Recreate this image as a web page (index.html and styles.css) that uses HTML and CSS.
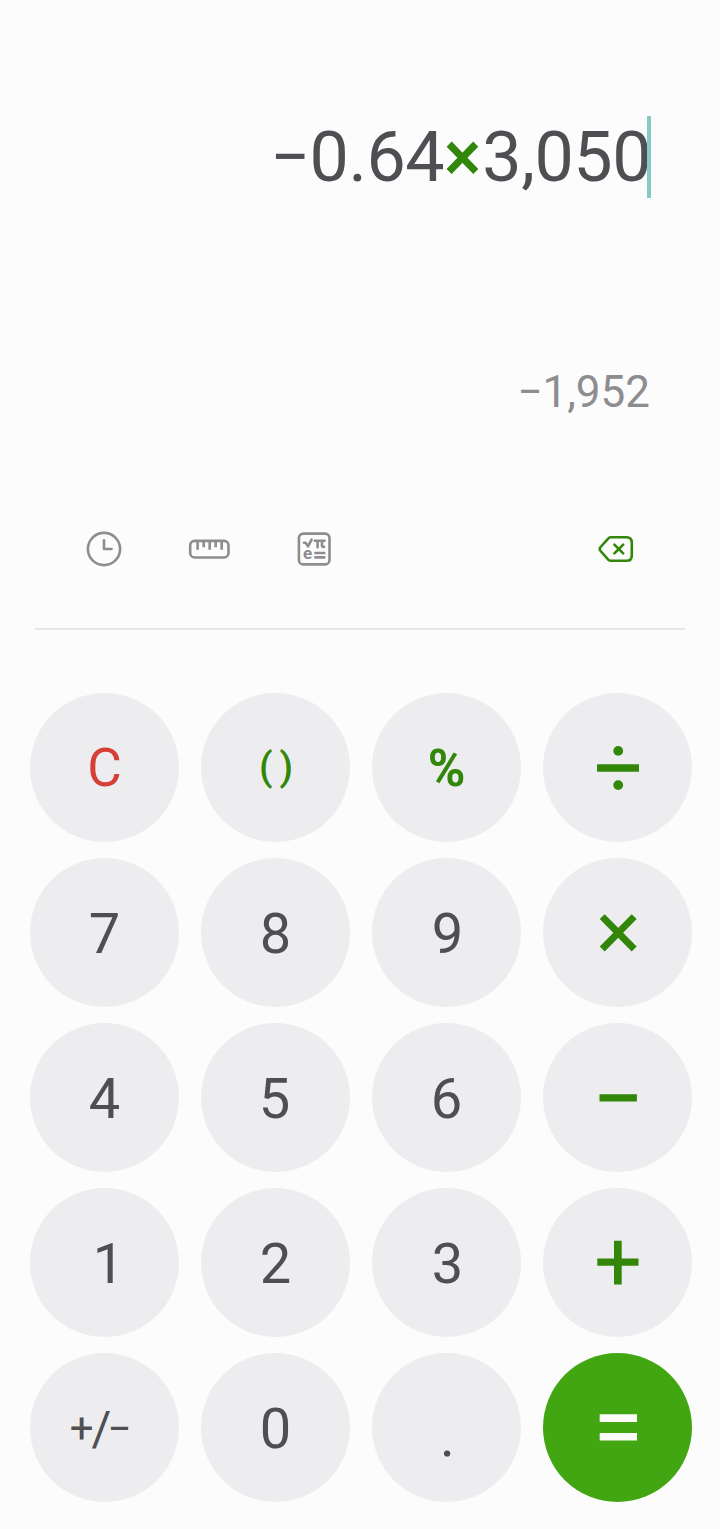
FILE: index.html
```html
<!DOCTYPE html>
<html lang="en">
<head>
  <meta charset="UTF-8">
  <meta name="viewport" content="width=device-width, initial-scale=1.0">
  <title>Calculator</title>
  <link rel="stylesheet" href="styles.css">
</head>
<body>

<div class="calculator">
  <div class="display">
    <div class="expression">−0.64<span class="operator">×</span>3,050<span class="cursor"></span></div>
    <div class="result">−1,952</div>
  </div>

  <div class="toolbar">
    <svg class="icon history" width="36" height="36" viewBox="0 0 36 36">
      <circle cx="18" cy="18" r="16.1"/>
      <path d="M18 9.2V18h7.5"/>
    </svg>
    <svg class="icon ruler" width="42" height="22" viewBox="0 0 42 22">
      <rect x="2.2" y="2.9" width="38.3" height="16.6" rx="4.5"/>
      <path d="M9.6 3.5v8.2M15.7 3.5v5.7M21.7 3.5v8.2M27.7 3.5v5.7M33.7 3.5v8.2"/>
    </svg>
    <svg class="icon scientific" width="34" height="34" viewBox="0 0 34 34">
      <rect x="1.9" y="1.6" width="30.6" height="30.8" rx="4.5"/>
      <path d="M7 10.8h1.6l2.4 3.6L14.6 7.6"/>
      <path d="M17.8 8.7h9.8M20.6 8.7v6.5M25 8.7v4.9q0 1.3 2 1.3M18.4 21h8.9M18.4 25.4h8.9"/>
      <text x="6" y="26.8">e</text>
    </svg>
    <svg class="icon backspace" width="36" height="28" viewBox="0 0 36 28">
      <path d="M12.6 2.2H28.4q5.4 0 5.4 5.4v12.8q0 5.4-5.4 5.4H13q-1.6 0-2.8-1.2L2.6 16q-1.8-2 0-4l7.6-8.4q1-1.4 2.4-1.4z"/>
      <path d="M16.4 9.6l8.8 8.8M25.2 9.6l-8.8 8.8"/>
    </svg>
  </div>

  <div class="keypad">
    <button class="key clear">C</button>
    <button class="key brackets"><span>(</span><span>)</span></button>
    <button class="key percent">%</button>
    <button class="key" aria-label="Divide">
      <svg class="op" viewBox="0 0 50 50"><path d="M4 21.2h42v7.6H4z"/><circle cx="25.2" cy="7.9" r="4.9"/><circle cx="25.2" cy="42.1" r="4.9"/></svg>
    </button>

    <button class="key">7</button>
    <button class="key">8</button>
    <button class="key nine">9</button>
    <button class="key" aria-label="Multiply">
      <svg class="op" viewBox="0 0 50 50"><path class="line" d="M9.2 8.6l32 32.4M41.2 8.6L9.2 41"/></svg>
    </button>

    <button class="key">4</button>
    <button class="key five">5</button>
    <button class="key">6</button>
    <button class="key" aria-label="Minus">
      <svg class="op" viewBox="0 0 50 50"><path d="M6.5 21.2h37.4v7.3H6.5z"/></svg>
    </button>

    <button class="key one">1</button>
    <button class="key">2</button>
    <button class="key three">3</button>
    <button class="key" aria-label="Plus">
      <svg class="op" viewBox="0 0 50 50"><path d="M4.3 20.4h41.2v7.3H4.3zM21 2.8h7.7v43.8H21z"/></svg>
    </button>

    <button class="key negate">+<span class="slash">/</span>−</button>
    <button class="key">0</button>
    <button class="key dot">.</button>
    <button class="key equals" aria-label="Equals">
      <svg class="op" viewBox="0 0 50 50"><path d="M6.7 11.3H44v7.8H6.7zM6.7 30H44v7.6H6.7z"/></svg>
    </button>
  </div>
</div>

</body>
</html>
```

FILE: styles.css
```css
* { box-sizing: border-box; }
body { margin: 0; background-color: #fcfcfc; font-family: Roboto, sans-serif; color: #4f4f53; }
.calculator { width: 720px; height: 1529px; padding: 116px 28px 0 30px; overflow: hidden; }

.display { height: 404px; padding-right: 42px; text-align: right; }
.expression { height: 82px; margin-right: -1px; font-size: 70px; line-height: 82px; letter-spacing: -0.5px; white-space: nowrap; position: relative; }
.operator { color: #32870a; font-weight: 500; letter-spacing: 1px; }
.cursor { position: absolute; right: 0; top: 0; width: 4px; height: 82px; background-color: #84cbc3; }
.result { margin-top: 168px; font-size: 44px; line-height: 52px; color: #8d8d90; }

.toolbar { display: flex; align-items: center; width: 650px; height: 110px; margin-left: 5px; padding: 0 51px 50px; border-bottom: 2px solid #e6e6e7; }
.icon { fill: none; stroke: #8d8d90; stroke-width: 2.6; stroke-linecap: round; stroke-linejoin: round; }
.icon text { fill: #8d8d90; stroke: none; font-size: 17px; font-weight: 700; }
.ruler { margin-left: 66px; stroke-linecap: butt; }
.scientific { margin-left: 67px; }
.backspace { margin-left: auto; stroke: #32870a; }

.keypad { display: grid; grid-template-columns: repeat(4, 149px); grid-auto-rows: 149px; gap: 16px 22px; margin-top: 63px; }
.key { display: flex; justify-content: center; align-items: center; padding: 2px 0 0; border: none; border-radius: 50%; background-color: #ededef; color: #4f4f53; font-family: inherit; font-size: 56px; line-height: 66px; }
.op { width: 50px; height: 50px; margin-top: -2px; fill: #32870a; }
.op .line { fill: none; stroke: #32870a; stroke-width: 7; }
.clear { padding-top: 0; color: #d63f36; font-size: 53px; }
.brackets { gap: 7px; padding: 0 0 1px 1px; color: #32870a; font-size: 39px; font-weight: 500; }
.percent { padding-top: 2px; color: #32870a; font-size: 51px; font-weight: 700; }
.nine, .three { padding-left: 2px; }
.five { padding-right: 2px; }
.one { padding-left: 8px; }
.negate { padding-right: 8px; font-size: 42px; }
.slash { margin: 0 -4px 0 -2px; font-size: 48px; }
.dot { padding: 18px 0 0 2px; }
.equals { background-color: #42a612; }
.equals .op { fill: #fcfcfc; }
```
